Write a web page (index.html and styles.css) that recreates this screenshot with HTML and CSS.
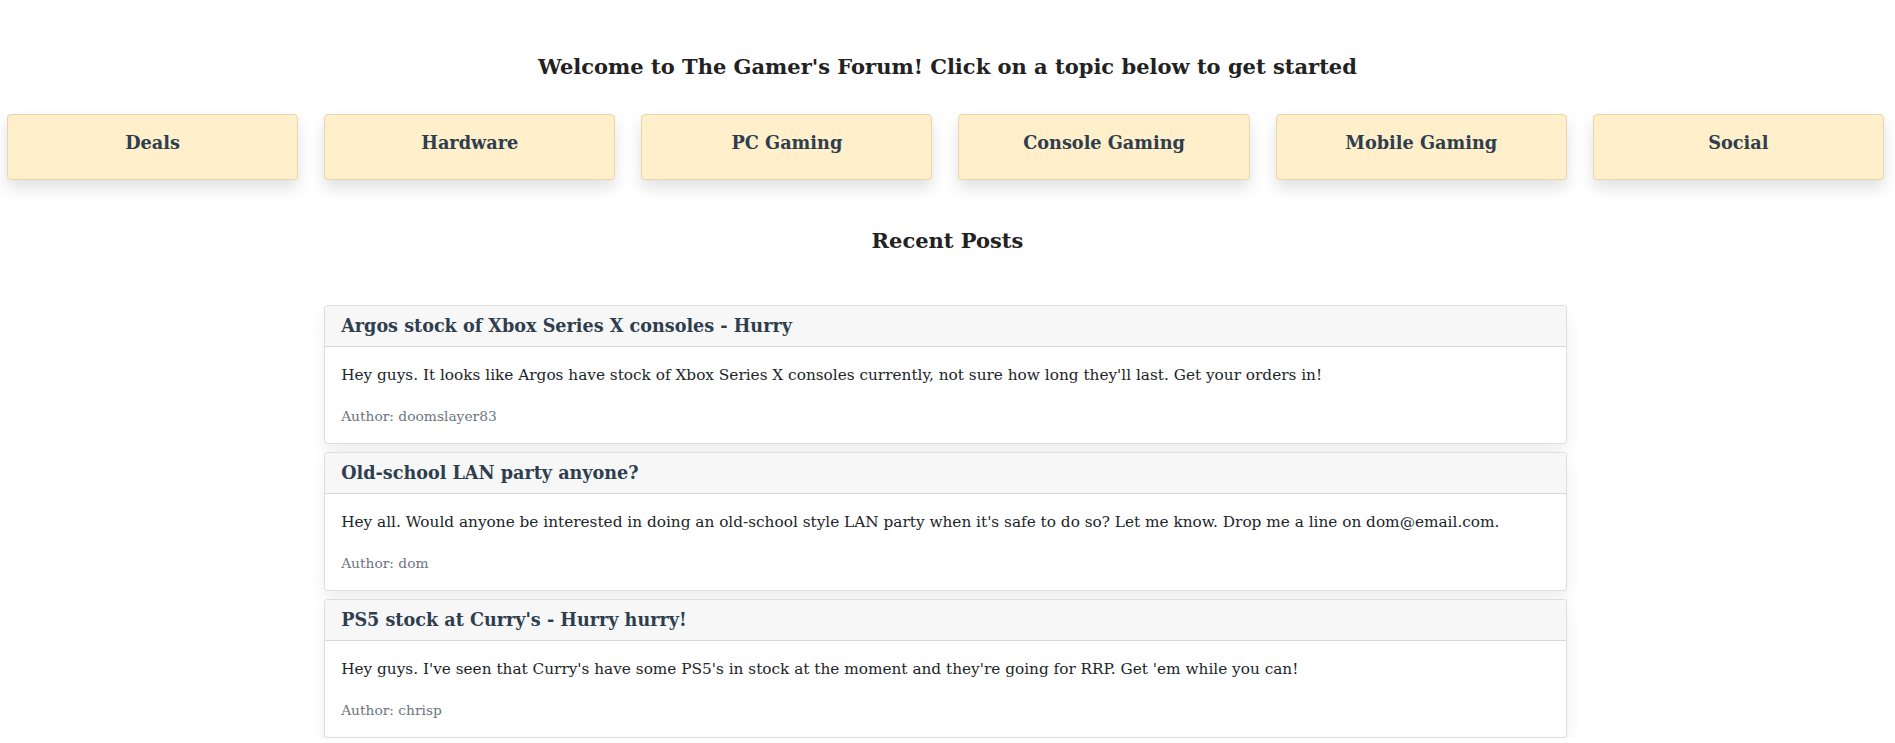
FILE: index.html
```html
<!DOCTYPE html>
<html lang="en">
<head>
<meta charset="utf-8">
<title>The Gamer's Forum</title>
<link rel="stylesheet" href="styles.css">
</head>
<body>
<main class="page">
  <h1 class="welcome">Welcome to The Gamer's Forum! Click on a topic below to get started</h1>
  <nav class="grid topics">
    <a class="topic" href="#">Deals</a>
    <a class="topic" href="#">Hardware</a>
    <a class="topic" href="#">PC Gaming</a>
    <a class="topic" href="#">Console Gaming</a>
    <a class="topic" href="#">Mobile Gaming</a>
    <a class="topic" href="#">Social</a>
  </nav>
  <h2 class="recent">Recent Posts</h2>
  <section class="grid">
    <div class="posts">
      <article class="card">
        <header class="card-header">Argos stock of Xbox Series X consoles - Hurry</header>
        <div class="card-body">
          <p class="card-text">Hey guys. It looks like Argos have stock of Xbox Series X consoles currently, not sure how long they'll last. Get your orders in!</p>
          <p class="author">Author: doomslayer83</p>
        </div>
      </article>
      <article class="card">
        <header class="card-header">Old-school LAN party anyone?</header>
        <div class="card-body">
          <p class="card-text">Hey all. Would anyone be interested in doing an old-school style LAN party when it's safe to do so? Let me know. Drop me a line on dom@email.com.</p>
          <p class="author">Author: dom</p>
        </div>
      </article>
      <article class="card">
        <header class="card-header">PS5 stock at Curry's - Hurry hurry!</header>
        <div class="card-body">
          <p class="card-text">Hey guys. I've seen that Curry's have some PS5's in stock at the moment and they're going for RRP. Get 'em while you can!</p>
          <p class="author">Author: chrisp</p>
        </div>
      </article>
    </div>
  </section>
</main>
</body>
</html>
```

FILE: styles.css
```css
* { box-sizing: border-box; }
html, body { margin: 0; padding: 0; background: #fff; }
body {
  font-family: "DejaVu Serif", "Liberation Serif", serif;
  color: #212529;
  font-size: 16px;
  line-height: 1.5;
}
.page { padding-top: 52px; }
.welcome {
  margin: 0;
  font-size: 21px;
  line-height: 29px;
  font-weight: 700;
  text-align: center;
  color: #222;
}
.grid {
  display: grid;
  grid-template-columns: repeat(6, 1fr);
  column-gap: 26px;
  padding: 0 11px 0 7px;
}
.topics { margin-top: 33px; }
.topic {
  display: flex;
  align-items: center;
  justify-content: center;
  height: 66px;
  padding-bottom: 7px;
  background: #ffefca;
  border: 1px solid #e8d6aa;
  border-radius: 4px;
  box-shadow: 0 8px 16px rgba(0,0,0,0.12);
  color: #2e3e4e;
  text-decoration: none;
  font-size: 17.7px;
  font-weight: 700;
}
.recent {
  margin: 46px 0 0;
  font-size: 21px;
  line-height: 29px;
  font-weight: 700;
  text-align: center;
  color: #222;
}
.posts {
  grid-column: 2 / 6;
  margin-top: 50px;
  display: flex;
  flex-direction: column;
  gap: 8px;
}
.card {
  border: 1px solid rgba(0,0,0,0.13);
  border-radius: 4px;
  background: #fff;
  box-shadow: 0 8px 16px rgba(0,0,0,0.07);
  overflow: hidden;
}
.card-header {
  background: #f7f7f7;
  border-bottom: 1px solid rgba(0,0,0,0.13);
  padding: 8px 16px;
  font-size: 17.6px;
  line-height: 24px;
  font-weight: 700;
  color: #2e3e4e;
}
.card-body { padding: 16px 16px 16px; }
.card-text {
  margin: 0 0 18px;
  font-size: 15.3px;
  line-height: 24px;
}
.author {
  margin: 0;
  font-size: 13.8px;
  line-height: 22px;
  color: #6c757d;
}
```
